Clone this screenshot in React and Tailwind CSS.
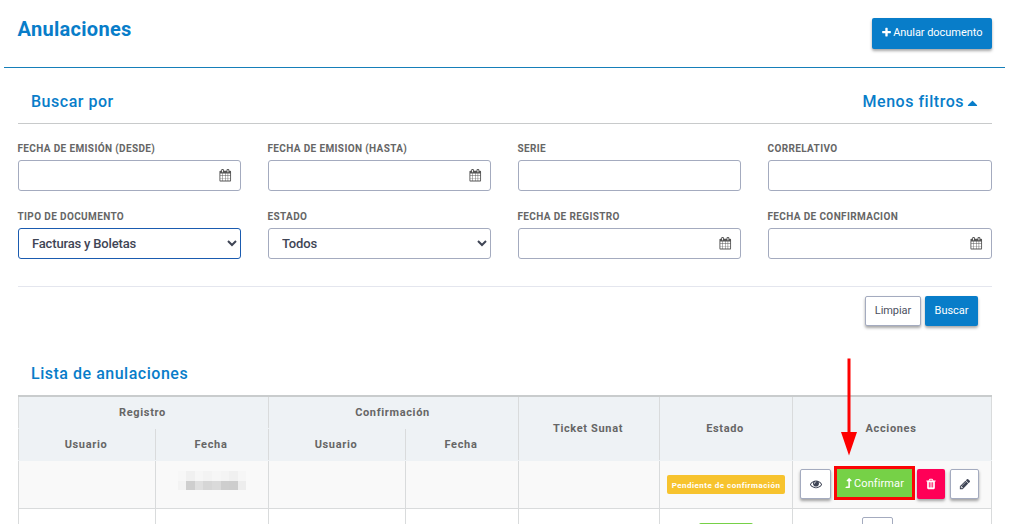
import React from "react";
import { FaLevelUpAlt, FaCaretUp } from "react-icons/fa";

const PATHS = {
  eye: "M1664 960q-152-236-381-353 61 104 61 225 0 185-131.5 316.5t-316.5 131.5-316.5-131.5-131.5-316.5q0-121 61-225-229 117-381 353 133 205 333.5 326.5t434.5 121.5 434.5-121.5 333.5-326.5zm-720-384q0-20-14-34t-34-14q-125 0-214.5 89.5t-89.5 214.5q0 20 14 34t34 14 34-14 14-34q0-86 61-147t147-61q20 0 34-14t14-34zm848 384q0 34-20 69-140 230-376.5 368.5t-499.5 138.5-499.5-139-376.5-368q-20-35-20-69t20-69q140-229 376.5-368t499.5-139 499.5 139 376.5 368q20 35 20 69z",
  calendar: "M192 1664h288v-288h-288v288zm352 0h320v-288h-320v288zm-352-352h288v-320h-288v320zm352 0h320v-320h-320v320zm-352-384h288v-288h-288v288zm736 736h320v-288h-320v288zm-384-736h320v-288h-320v288zm768 736h288v-288h-288v288zm-384-352h320v-320h-320v320zm-352-864v-288q0-13-9.5-22.5t-22.5-9.5h-64q-13 0-22.5 9.5t-9.5 22.5v288q0 13 9.5 22.5t22.5 9.5h64q13 0 22.5-9.5t9.5-22.5zm736 864h288v-320h-288v320zm-384-384h320v-288h-320v288zm384 0h288v-288h-288v288zm32-480v-288q0-13-9.5-22.5t-22.5-9.5h-64q-13 0-22.5 9.5t-9.5 22.5v288q0 13 9.5 22.5t22.5 9.5h64q13 0 22.5-9.5t9.5-22.5zm384-64v1280q0 52-38 90t-90 38h-1408q-52 0-90-38t-38-90v-1280q0-52 38-90t90-38h128v-96q0-66 47-113t113-47h64q66 0 113 47t47 113v96h384v-96q0-66 47-113t113-47h64q66 0 113 47t47 113v96h128q52 0 90 38t38 90z",
  trash: "M704 1376v-704q0-14-9-23t-23-9h-64q-14 0-23 9t-9 23v704q0 14 9 23t23 9h64q14 0 23-9t9-23zm256 0v-704q0-14-9-23t-23-9h-64q-14 0-23 9t-9 23v704q0 14 9 23t23 9h64q14 0 23-9t9-23zm256 0v-704q0-14-9-23t-23-9h-64q-14 0-23 9t-9 23v704q0 14 9 23t23 9h64q14 0 23-9t9-23zm-544-992h448l-48-117q-7-9-17-11h-317q-10 2-17 11zm928 32v64q0 14-9 23t-23 9h-96v948q0 83-47 143.5t-113 60.5h-832q-66 0-113-58.5t-47-141.5v-952h-96q-14 0-23-9t-9-23v-64q0-14 9-23t23-9h309l70-167q15-37 54-63t79-26h320q40 0 79 26t54 63l70 167h309q14 0 23 9t9 23z",
  pencil: "M491 1536l91-91-235-235-91 91v107h128v128h107zm523-928q0-22-22-22-10 0-17 7l-542 542q-7 7-7 17 0 22 22 22 10 0 17-7l542-542q7-7 7-17zm-54-192l416 416-832 832h-416v-416zm683 96q0 53-37 90l-166 166-416-416 166-165q36-38 90-38 53 0 91 38l235 234q37 39 37 91z",
  plus: "M1600 736v192q0 40-28 68t-68 28h-416v416q0 40-28 68t-68 28h-192q-40 0-68-28t-28-68v-416h-416q-40 0-68-28t-28-68v-192q0-40 28-68t68-28h416v-416q0-40 28-68t68-28h192q40 0 68 28t28 68v416h416q40 0 68 28t28 68z",
};

function Icon({ name, className }) {
  return (
    <svg viewBox="0 0 1792 1792" fill="currentColor" className={className}>
      <path d={PATHS[name]} />
    </svg>
  );
}

function Field({ label, date, option, active }) {
  return (
    <div>
      <div className="-ml-px h-[17px] whitespace-nowrap pl-[0.5px] text-[10px] font-bold leading-[12px] tracking-[0.37px] text-[#666]">{label}</div>
      {option ? (
        <select
          className={
            "block h-[31px] w-full rounded-[3px] border bg-white pl-[9px] text-[13px] font-medium tracking-[-0.17px] text-[#3f4555] outline-none " +
            (active ? "border-[#1a5bb0]" : "border-[#a4abbf]")
          }
        >
          <option>{option}</option>
        </select>
      ) : (
        <div className="flex h-[31px] items-center justify-end rounded-[3px] border border-[#a4abbf] pr-[8.5px] text-[#555]">
          {date && <Icon name="calendar" className="h-[12.5px] w-[12.5px]" />}
        </div>
      )}
    </div>
  );
}

const BTN = "flex items-center justify-center rounded-[2px] text-[11px] leading-none shadow-[0_2px_3px_rgba(0,0,0,0.35)] ";
const CELL = "flex items-center justify-center border-l border-[#d9dbdc] ";
const HEAD = CELL + "mb-px pt-[2px] pr-[2px]";
const COLS = "grid grid-cols-[137px_113px_137px_113px_141px_133px_200px] ";
const MOSAIC = [
  "bg-[#f3f3f3]", "bg-[#cecece]", "bg-[#dfdfdf]", "bg-[#d6d6d6]", "bg-[#dadada]", "bg-[#cecece]", "bg-[#cdcdcd]", "bg-[#ededed]",
];
const MOSAIC_TOP = [
  "bg-[#f7f7f7]", "bg-[#f0f0f0]", "bg-[#f6f6f6]", "bg-[#f3f3f3]", "bg-[#f6f6f6]", "bg-[#f4f4f4]", "bg-[#f0f0f0]", "bg-[#f6f6f6]",
];

export default function App() {
  return (
    <div className="relative h-[524px] w-[1012px] overflow-hidden bg-white font-['Roboto',sans-serif] text-[#666]">
      <header className="ml-1 flex h-[68px] w-[1001px] justify-between border-b border-[#167fb9] pl-[13.5px] pr-[13px]">
        <h1 className="mt-[17px] text-[20px] font-bold leading-[24px] tracking-[0.3px] text-[#087dc9]">Anulaciones</h1>
        <button className={BTN + "mt-[18px] h-[31px] w-[120px] whitespace-nowrap bg-[#087dc9] pb-[2px] pr-px tracking-[-0.05px] text-white"}>
          <Icon name="plus" className="mr-[1.5px] h-[11px] w-[11px]" />
          Anular documento
        </button>
      </header>

      <main className="ml-[18px] w-[974px]">
        <div className="flex h-[56px] items-start justify-between border-b border-[#c8cacb] pl-[13px] pr-[14px] pt-[24px] text-[16px] font-medium leading-[20px] tracking-[0.52px] text-[#087dc9]">
          <h2>Buscar por</h2>
          <div className="flex items-center">
            Menos filtros
            <FaCaretUp className="ml-[3px] mt-[2px] h-[16px] w-[11px]" />
          </div>
        </div>

        <div className="grid h-[163px] grid-cols-[223px_223px_223px_224px] content-start gap-x-[27px] gap-y-[20px] border-b border-[#e4e6ee] pt-[19px]">
          <Field label="FECHA DE EMISIÓN (DESDE)" date />
          <Field label="FECHA DE EMISION (HASTA)" date />
          <Field label="SERIE" />
          <Field label="CORRELATIVO" />
          <Field label="TIPO DE DOCUMENTO" option="Facturas y Boletas" active />
          <Field label="ESTADO" option="Todos" />
          <Field label="FECHA DE REGISTRO" date />
          <Field label="FECHA DE CONFIRMACION" date />
        </div>

        <div className="flex justify-end gap-1 pr-[14px] pt-[9px]">
          <button className={BTN + "h-[30px] w-[56px] border border-[#a4abbf] bg-white pb-[2px] tracking-[-0.05px] text-[#4b5060]"}>Limpiar</button>
          <button className={BTN + "h-[30px] w-[53px] bg-[#087dc9] pb-[2px] tracking-[-0.05px] text-white"}>Buscar</button>
        </div>

        <h2 className="mt-[38px] pl-[13px] text-[16px] font-medium leading-[20px] tracking-[0.52px] text-[#087dc9]">Lista de anulaciones</h2>

        <div className="mt-[11px] border-t-2 border-[#c9cccd]">
          <div className="grid h-[64px] grid-cols-[137px_113px_137px_113px_141px_133px_200px] grid-rows-[32px_32px] bg-[#eef2f5] text-[11px] font-bold tracking-[0.65px]">
            <div className={HEAD + " col-span-2"}>Registro</div>
            <div className={HEAD + " col-span-2"}>Confirmación</div>
            <div className={HEAD + " row-span-2"}>Ticket Sunat</div>
            <div className={HEAD + " row-span-2"}>Estado</div>
            <div className={HEAD + " row-span-2 border-r"}>Acciones</div>
            <div className={HEAD}>Usuario</div>
            <div className={HEAD}>Fecha</div>
            <div className={HEAD}>Usuario</div>
            <div className={HEAD}>Fecha</div>
          </div>

          <div className={COLS + "h-[48px] border-b border-[#d9dbdc] bg-[#f9f9f9]"}>
            <div className={CELL} />
            <div className={CELL}>
              <div className="mb-[8px] grid grid-cols-8">
                {MOSAIC_TOP.map((c, i) => <span key={"t" + i} className={"h-[10px] w-[8.6px] " + c} />)}
                {MOSAIC.map((c, i) => <span key={i} className={"h-[9px] w-[8.6px] " + c} />)}
              </div>
            </div>
            <div className={CELL} />
            <div className={CELL} />
            <div className={CELL} />
            <div className={CELL}>
              <span className="flex h-[19px] w-[118px] items-center justify-center whitespace-nowrap rounded-[2px] bg-[#f7c32e] pt-[2px] text-[8px] font-bold tracking-[0.48px] text-white">
                Pendiente de confirmación
              </span>
            </div>
            <div className={CELL + "border-r !justify-start !items-start pl-[7px] pt-[5px]"}>
              <button className={BTN + "mt-[3px] h-[30px] w-[31px] border border-[#a4abbf] bg-white text-[#3f4555]"}>
                <Icon name="eye" className="mb-px h-[12px] w-[12px]" />
              </button>
              <div className="ml-[3px] h-[34px] w-[81px] border-[3px] border-[#fb0505]">
                <button className="flex h-full w-full items-center justify-center bg-[#76d147] text-[11px] leading-none tracking-[0.1px] text-white">
                  <FaLevelUpAlt className="mr-[2px] h-[10px] w-[7px]" />
                  Confirmar
                </button>
              </div>
              <button className={BTN + "ml-[2px] mt-[3px] h-[30px] w-[28px] bg-[#ff0057] pr-px text-white"}>
                <Icon name="trash" className="mb-px h-[12px] w-[12px]" />
              </button>
              <button className={BTN + "ml-[5px] mt-[3px] h-[30px] w-[29px] border border-[#a4abbf] bg-white text-[#3f4555]"}>
                <Icon name="pencil" className="mb-px h-[12px] w-[12px]" />
              </button>
            </div>
          </div>

          <div className={COLS + "h-[40px]"}>
            <div className={CELL} />
            <div className={CELL} />
            <div className={CELL} />
            <div className={CELL} />
            <div className={CELL} />
            <div className={CELL + "!items-start pr-px pt-[14px]"}>
              <span className="h-[19px] w-[54px] rounded-[2px] bg-[#76d147]" />
            </div>
            <div className={CELL + "border-r !items-start pr-[30px] pt-[8px]"}>
              <span className="h-[30px] w-[31px] rounded-[2px] border border-[#a4abbf] bg-white" />
            </div>
          </div>
        </div>
      </main>

      <svg className="absolute left-[840px] top-[358px]" width="18" height="98" viewBox="0 0 18 98">
        <path d="M7.5 0.5h3v75h-3zM1 74h16L9 97.5z" fill="#fe0000" />
      </svg>
    </div>
  );
}
